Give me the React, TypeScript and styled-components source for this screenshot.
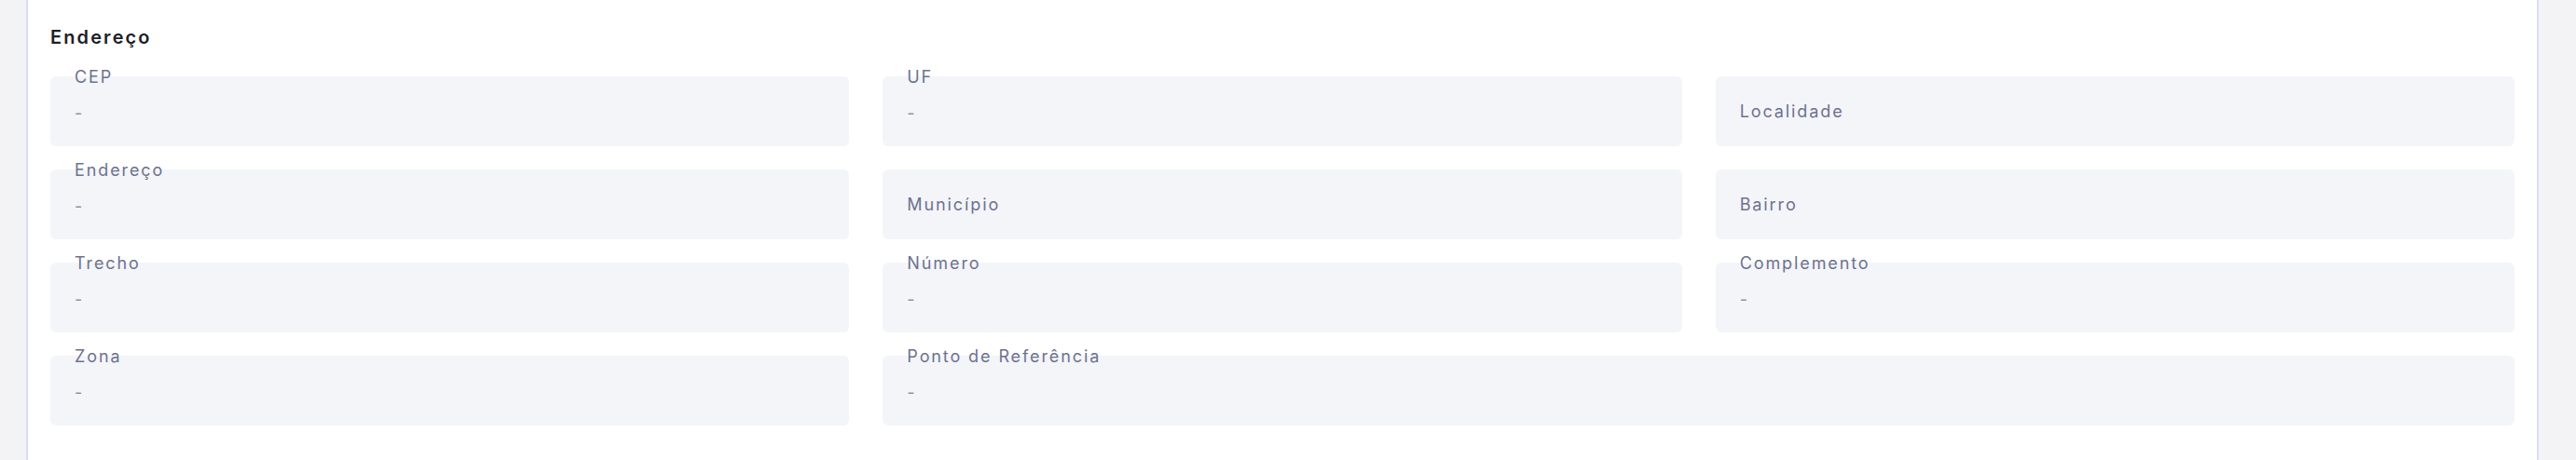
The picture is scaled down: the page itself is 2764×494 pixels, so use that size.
import React from 'react';
import styled, { createGlobalStyle } from 'styled-components';

const GlobalStyle = createGlobalStyle`
  html, body {
    margin: 0;
    padding: 0;
    overflow: hidden;
    background: #f3f3f6;
    font-family: Inter, "Noto Sans", sans-serif;
  }
`;

const Page = styled.div`
  display: flex;
  padding: 0 40px 0 28px;
  min-height: 494px;
  background: #f3f3f6;
`;

const Card = styled.section`
  flex: 1;
  background: #ffffff;
  border-left: 2px solid #d9ddf1;
  border-right: 2px solid #d9ddf1;
  padding: 28px 24px 60px;
`;

const SectionTitle = styled.h3`
  margin: 0 0 30px;
  font-size: 20px;
  line-height: 24px;
  font-weight: 600;
  letter-spacing: 2.1px;
  color: #1d2127;
`;

const FieldsGrid = styled.div`
  display: grid;
  grid-template-columns: repeat(3, 1fr);
  column-gap: 36px;
  row-gap: 25px;
`;

const Field = styled.div<{ $span?: number }>`
  position: relative;
  grid-column: span ${p => p.$span ?? 1};
  height: 75px;
  border-radius: 6px;
  background: #f4f5f9;
`;

const FieldLabel = styled.span<{ $floating: boolean }>`
  position: absolute;
  left: 26px;
  top: ${p => (p.$floating ? '-10px' : '27px')};
  font-size: 18px;
  line-height: 22px;
  letter-spacing: 1.9px;
  color: #6d7290;
  white-space: nowrap;
`;

const FieldValue = styled.div`
  padding: 29px 26px 0;
  font-size: 18px;
  line-height: 22px;
  color: #8a8fa6;
`;

type FieldData = { label: string; value?: string; span?: number };

const fields: FieldData[] = [
  { label: 'CEP', value: '-' },
  { label: 'UF', value: '-' },
  { label: 'Localidade' },
  { label: 'Endereço', value: '-' },
  { label: 'Município' },
  { label: 'Bairro' },
  { label: 'Trecho', value: '-' },
  { label: 'Número', value: '-' },
  { label: 'Complemento', value: '-' },
  { label: 'Zona', value: '-' },
  { label: 'Ponto de Referência', value: '-', span: 2 },
];

export default function App() {
  return (
    <>
      <GlobalStyle />
      <Page>
        <Card>
          <SectionTitle>Endereço</SectionTitle>
          <FieldsGrid>
            {fields.map(f => (
              <Field key={f.label} $span={f.span}>
                <FieldLabel $floating={!!f.value}>{f.label}</FieldLabel>
                {f.value && <FieldValue>{f.value}</FieldValue>}
              </Field>
            ))}
          </FieldsGrid>
        </Card>
      </Page>
    </>
  );
}
